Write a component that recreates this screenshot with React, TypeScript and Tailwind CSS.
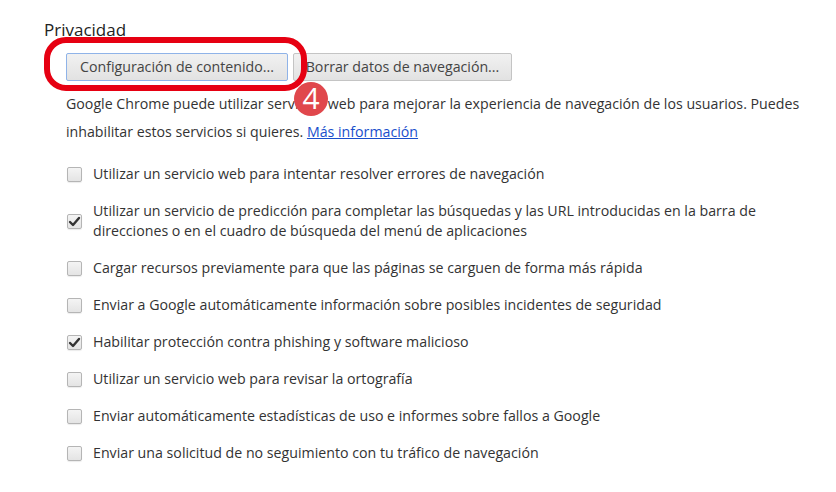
import React from "react";

const font = { fontFamily: '"Open Sans", "Noto Sans", sans-serif' };

interface Option {
  label: string;
  checked: boolean;
}

const options: Option[] = [
  { label: "Utilizar un servicio web para intentar resolver errores de navegación", checked: false },
  {
    label:
      "Utilizar un servicio de predicción para completar las búsquedas y las URL introducidas en la barra de direcciones o en el cuadro de búsqueda del menú de aplicaciones",
    checked: true,
  },
  { label: "Cargar recursos previamente para que las páginas se carguen de forma más rápida", checked: false },
  { label: "Enviar a Google automáticamente información sobre posibles incidentes de seguridad", checked: false },
  { label: "Habilitar protección contra phishing y software malicioso", checked: true },
  { label: "Utilizar un servicio web para revisar la ortografía", checked: false },
  { label: "Enviar automáticamente estadísticas de uso e informes sobre fallos a Google", checked: false },
  { label: "Enviar una solicitud de no seguimiento con tu tráfico de navegación", checked: false },
];

function Checkbox({ checked }: { checked: boolean }) {
  return (
    <div className="w-[15px] h-[15px] shrink-0 rounded-[2px] border border-[#b5b5b5] bg-gradient-to-b from-[#f4f4f4] to-[#e4e4e4] shadow-[0_1px_1px_rgba(0,0,0,0.08)] flex items-center justify-center">
      {checked && (
        <svg width="13" height="13" viewBox="0 0 13 13">
          <path d="M2 7 L5 10 L11 3" fill="none" stroke="#333" strokeWidth="2.4" strokeLinecap="round" strokeLinejoin="round" />
        </svg>
      )}
    </div>
  );
}

function Button({ children, focused }: { children: React.ReactNode; focused?: boolean }) {
  return (
    <button
      className={`h-[28px] px-[8px] whitespace-nowrap rounded-[2px] border bg-gradient-to-b from-[#f1f1f1] to-[#e2e2e2] text-[#444] text-[14.2px] ${
        focused ? "border-[#8fb3e8] w-[222px]" : "border-[#c4c4c4] w-[219px]"
      }`}
    >
      {children}
    </button>
  );
}

export default function App() {
  return (
    <div className="w-[836px] h-[492px] bg-white relative overflow-hidden" style={font}>
      <div className="pl-[44px] pt-[18px]">
        <h2 className="text-[17px] leading-[23px] text-[#222]">Privacidad</h2>
        <div className="ml-[22px] mt-[12px]">
          <div className="flex gap-[5px]">
            <Button focused>Configuración de contenido...</Button>
            <Button>Borrar datos de navegación...</Button>
          </div>
          <p className="mt-[9px] text-[14.2px] leading-[28px] text-[#333] w-[745px]">
            Google Chrome puede utilizar servicios web para mejorar la experiencia de navegación de los usuarios. Puedes
            inhabilitar estos servicios si quieres.{" "}
            <a className="text-[#1a4fcc] underline" href="#">
              Más información
            </a>
          </p>
          <div className="mt-[18px] flex flex-col gap-[17px]">
            {options.map((o) => (
              <div key={o.label} className="flex items-center gap-[11px] pl-[1px]">
                <Checkbox checked={o.checked} />
                <span className="text-[14.2px] leading-[20px] text-[#333] w-[700px]">{o.label}</span>
              </div>
            ))}
          </div>
        </div>
      </div>

      {/* annotation */}
      <div className="absolute left-[44px] top-[37px] w-[263px] h-[54px] rounded-[22px] border-[6px] border-[#e60012] pointer-events-none" />
      <div className="absolute left-[294px] top-[82px] w-[34px] h-[34px] pb-[3px] rounded-full bg-[#e0474c] flex items-center justify-center text-white text-[30px] leading-none">
        4
      </div>
    </div>
  );
}
